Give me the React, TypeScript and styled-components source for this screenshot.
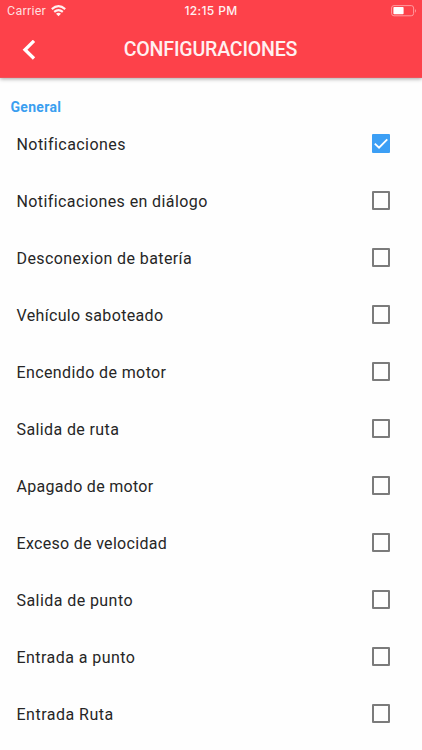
import React from "react";
import styled, { createGlobalStyle } from "styled-components";

const GlobalStyle = createGlobalStyle`
  * { box-sizing: border-box; }
  html, body { height: 100%; }
  body { margin: 0; background: #fefefe; font-family: Roboto, Inter, sans-serif; overflow: hidden; }
`;

const Screen = styled.div`
  width: 422px;
  height: 750px;
  overflow: hidden;
  display: flex;
  flex-direction: column;
  background: #fefefe;
`;

const Header = styled.header`
  flex: none;
  height: 78px;
  background: #fd414a;
  color: #fff0f0;
  border-bottom: 1px solid #f0525a;
  box-shadow: 0 1px 4px rgba(0, 0, 0, 0.36);
`;

const StatusBar = styled.div`
  height: 22px;
  display: grid;
  grid-template-columns: 1fr auto 1fr;
  align-items: center;
  padding: 0 5px 0 7px;
`;

const Carrier = styled.div`
  display: flex;
  align-items: center;
  gap: 5px;
  font-size: 12.5px;
  letter-spacing: 0.25px;
  line-height: 22px;
  color: #ffdedf;
`;

const Clock = styled.div`
  margin: 0 2px 0 0;
  font-family: Inter, sans-serif;
  font-size: 12px;
  font-weight: 500;
  letter-spacing: 0.35px;
  line-height: 22px;
`;

const Battery = styled.svg`
  justify-self: end;
  display: block;
`;

const NavBar = styled.div`
  height: 55px;
  display: grid;
  grid-template-columns: 60px 1fr 61px;
  align-items: center;
`;

const BackButton = styled.button`
  border: 0;
  padding: 0 0 0 22px;
  background: none;
  display: flex;
`;

const Title = styled.h1`
  margin: 0;
  text-align: center;
  font-size: 19.6px;
  font-weight: 500;
  letter-spacing: -0.2px;
  line-height: 55px;
  white-space: nowrap;
`;

const SectionTitle = styled.h2`
  flex: none;
  margin: 18px 0 0 10.5px;
  height: 19px;
  font-size: 14px;
  line-height: 22px;
  font-weight: 700;
  letter-spacing: 0.3px;
  color: #3a9ff0;
`;

const List = styled.ul`
  list-style: none;
  margin: 0;
  padding: 0;
`;

const Row = styled.li`
  height: 57px;
  display: flex;
  align-items: center;
  justify-content: space-between;
  padding: 0 32px 0 16.5px;
`;

const Settings = styled.main`
  display: flex;
  flex-direction: column;
  min-height: 0;
`;

const Label = styled.span<{ $tracking: number }>`
  padding-top: 2px;
  font-size: 16px;
  line-height: 22px;
  letter-spacing: ${(p) => p.$tracking}px;
  white-space: nowrap;
  color: #262626;
`;

const Checkbox = styled.span<{ $checked: boolean }>`
  flex: none;
  width: 18.5px;
  height: 19px;
  display: flex;
  align-items: center;
  justify-content: center;
  border: ${(p) => (p.$checked ? "0" : "2px solid #7b7b7b")};
  border-radius: 1px;
  background: ${(p) => (p.$checked ? "#3c9ff5" : "#fefefe")};
`;

const settings = [
  { label: "Notificaciones", checked: true, tracking: 0.45 },
  { label: "Notificaciones en diálogo", checked: false, tracking: 0.4 },
  { label: "Desconexion de batería", checked: false, tracking: 0.4 },
  { label: "Vehículo saboteado", checked: false, tracking: 0.33 },
  { label: "Encendido de motor", checked: false, tracking: 0.39 },
  { label: "Salida de ruta", checked: false, tracking: 0.39 },
  { label: "Apagado de motor", checked: false, tracking: 0.3 },
  { label: "Exceso de velocidad", checked: false, tracking: 0.31 },
  { label: "Salida de punto", checked: false, tracking: 0.43 },
  { label: "Entrada a punto", checked: false, tracking: 0.45 },
  { label: "Entrada Ruta", checked: false, tracking: 0.49 },
];

const WifiIcon = () => (
  <svg width="15" height="12" viewBox="0 0 15 12" fill="none" stroke="#fff0f0" strokeWidth="2.1">
    <path d="M0.8 4.1Q7.5-1.7 14.2 4.1" />
    <path d="M3.2 6.9Q7.5 3.2 11.8 6.9" />
    <path d="M7.5 11.2L5 8.8Q7.5 6.9 10 8.8Z" fill="#fff0f0" stroke="none" />
  </svg>
);

const BatteryIcon = () => (
  <Battery width="26" height="12" viewBox="0 0 26 12">
    <rect x="0.6" y="0.6" width="22" height="10.2" rx="2.4" fill="none" stroke="#ff9a9e" />
    <rect x="2.4" y="2" width="10.2" height="7.2" rx="0.8" fill="#fff" />
    <path d="M24 4Q26 5.8 24 7.7Z" fill="#ff9a9e" />
  </Battery>
);

export default function App() {
  return (
    <Screen>
      <GlobalStyle />
      <Header>
        <StatusBar>
          <Carrier>
            <span>Carrier</span>
            <WifiIcon />
          </Carrier>
          <Clock>12:15 PM</Clock>
          <BatteryIcon />
        </StatusBar>
        <NavBar>
          <BackButton aria-label="Volver">
            <svg width="14" height="20" viewBox="0 0 14 20" fill="none" stroke="#fff" strokeWidth="3.3">
              <path d="M12 0.9L3 9.7L12 18.5" />
            </svg>
          </BackButton>
          <Title>CONFIGURACIONES</Title>
        </NavBar>
      </Header>
      <Settings>
        <SectionTitle>General</SectionTitle>
        <List>
          {settings.map((s) => (
            <Row key={s.label}>
              <Label $tracking={s.tracking}>{s.label}</Label>
              <Checkbox $checked={s.checked}>
                {s.checked && (
                  <svg width="19" height="19" viewBox="0 0 20 20" fill="none" stroke="#fff" strokeWidth="2">
                    <path d="M3 10.2L7.6 14.5L16.5 5.5" />
                  </svg>
                )}
              </Checkbox>
            </Row>
          ))}
        </List>
      </Settings>
    </Screen>
  );
}
